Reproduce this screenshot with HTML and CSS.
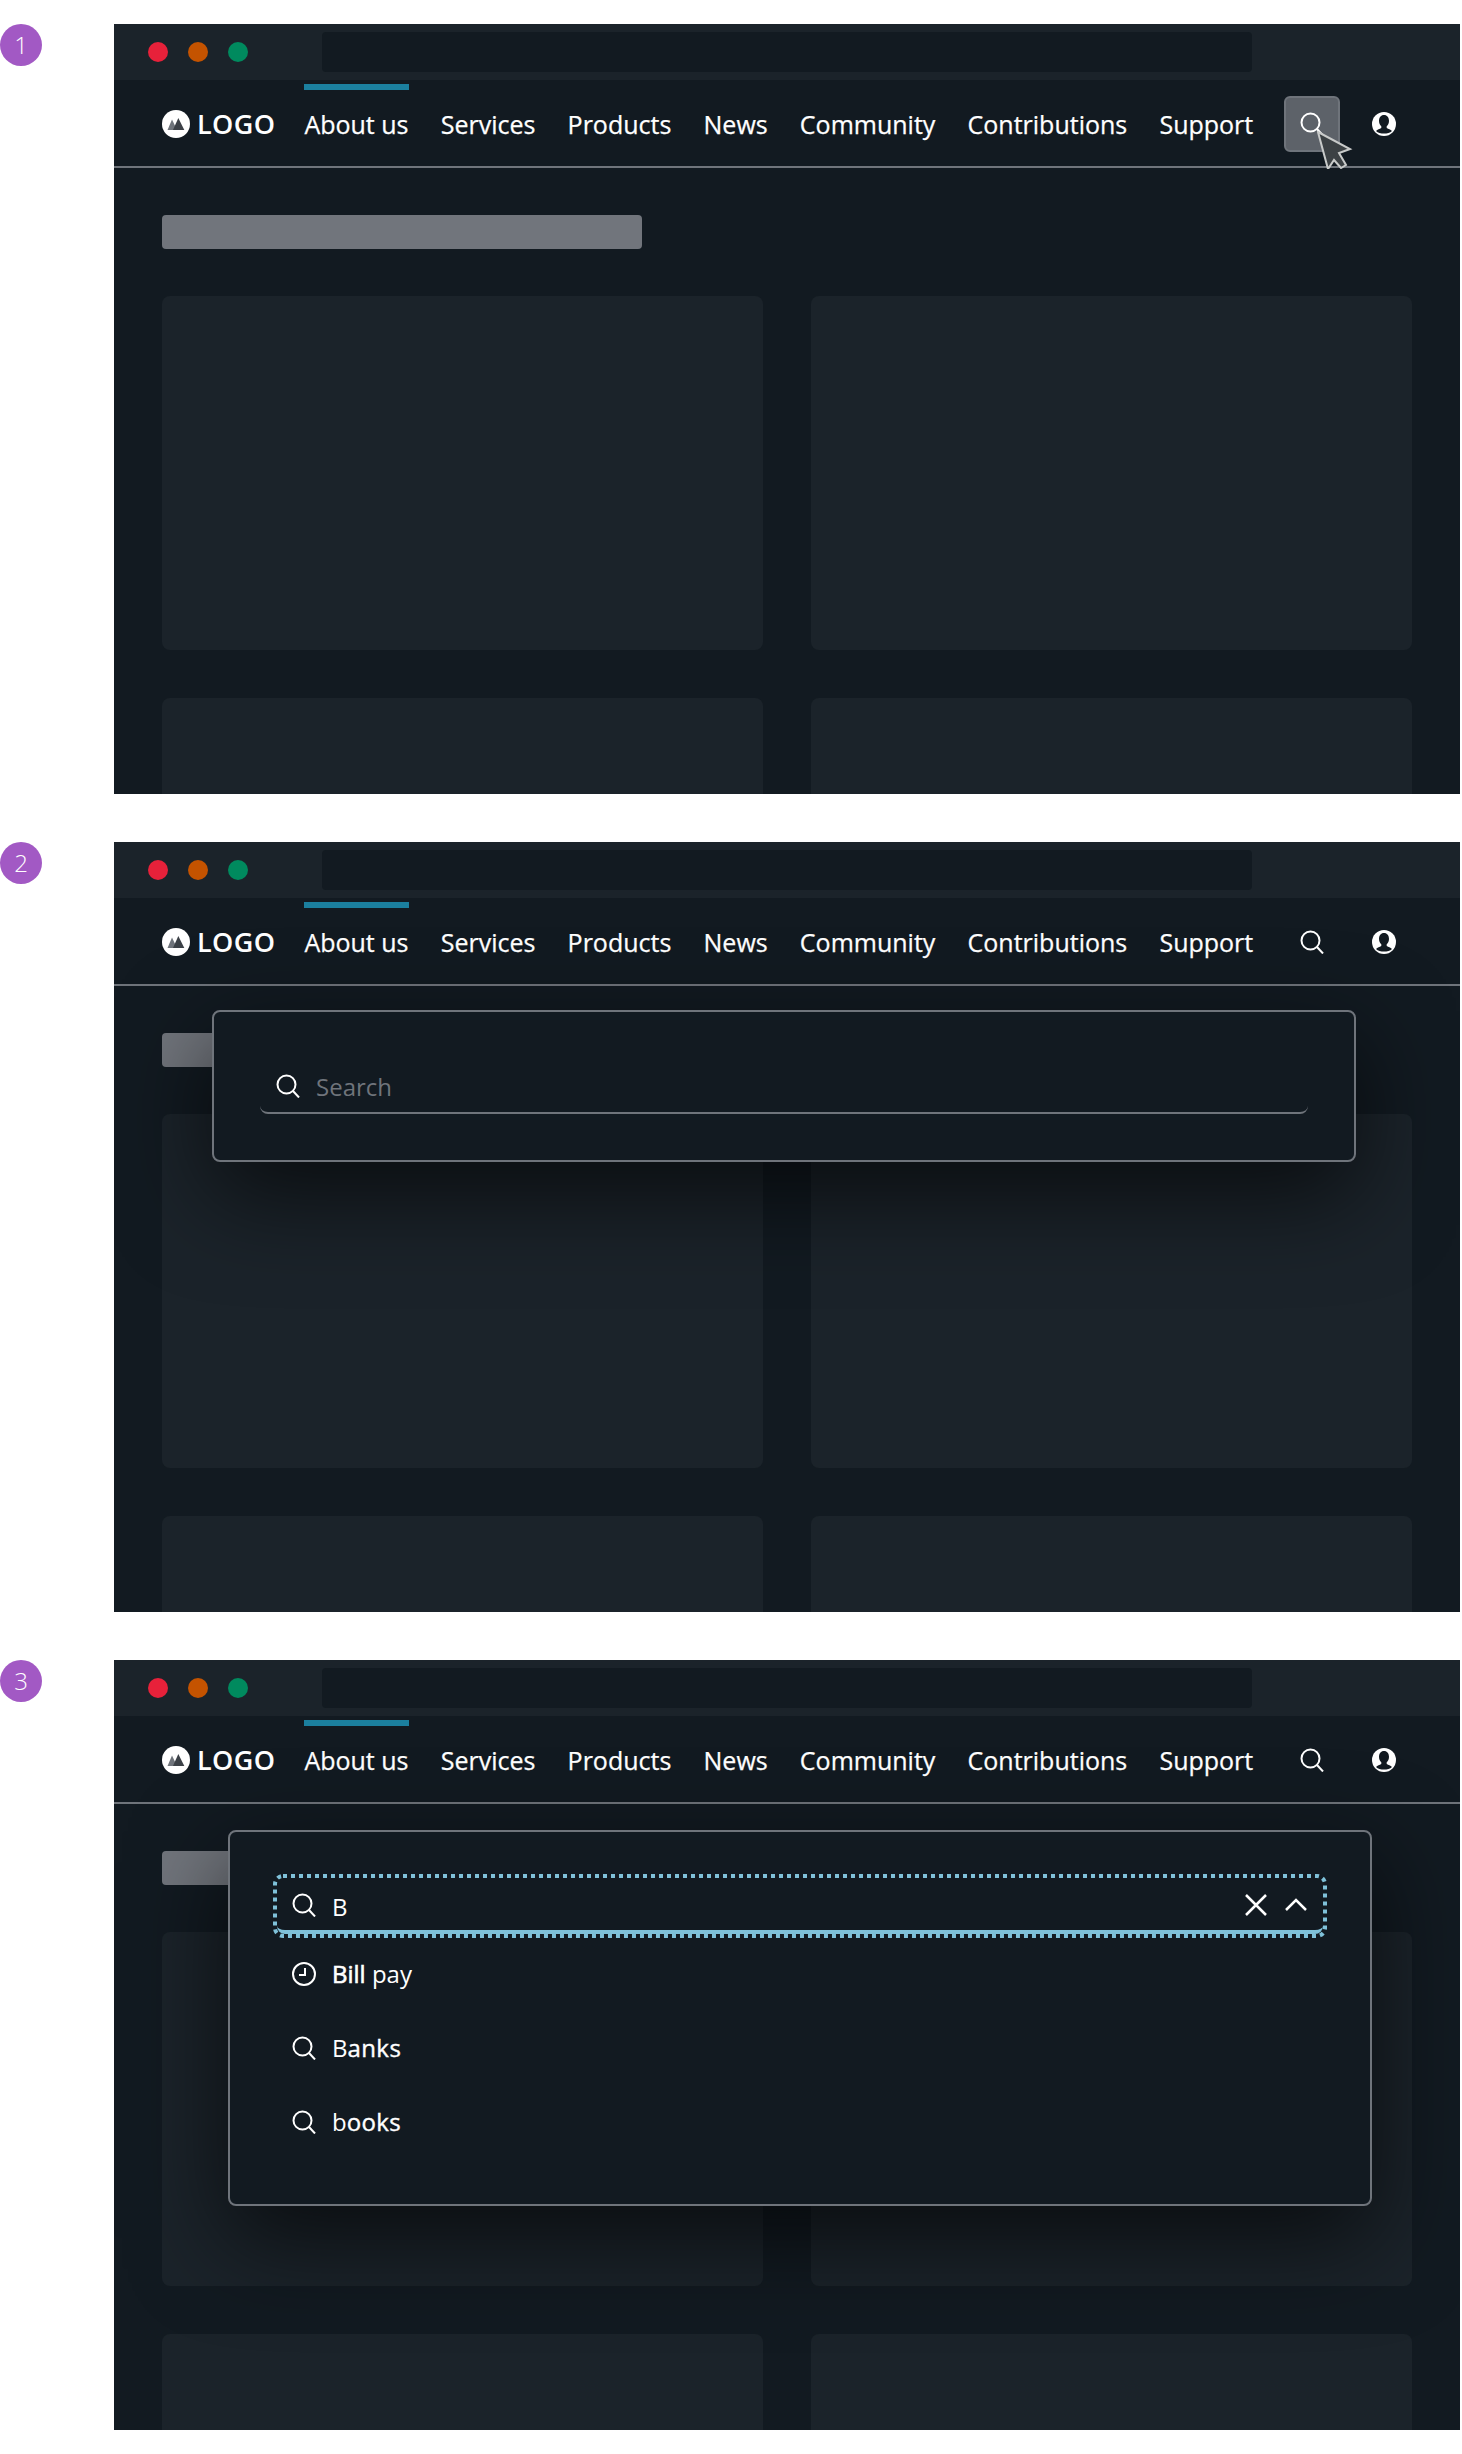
FILE: index.html
```html
<!DOCTYPE html>
<html lang="en">
<head>
    <meta charset="UTF-8">
    <meta name="viewport" content="width=device-width, initial-scale=1.0">
    <title>Search steps</title>
    <link rel="stylesheet" href="styles.css">
</head>
<body>
    <svg class="sprite" aria-hidden="true">
        <symbol id="i-search" viewBox="0 0 24 24">
            <circle cx="10.5" cy="10.5" r="9" fill="none" stroke="#fff" stroke-width="2"/>
            <path d="M17 17l6 6.5" fill="none" stroke="#fff" stroke-width="2"/>
        </symbol>
        <symbol id="i-clock" viewBox="0 0 24 24">
            <circle cx="12" cy="12" r="11" fill="none" stroke="#fff" stroke-width="2"/>
            <path d="M13 6v7H7" fill="none" stroke="#fff" stroke-width="2"/>
        </symbol>
        <symbol id="i-user" viewBox="0 0 24 24">
            <circle cx="12" cy="12" r="12" fill="#fff"/>
            <path d="M12 3c-3.200 0-5 2.600-5 5.800 0 2.400.9 4.200 2.300 5.400v1.800c-1.800.9-3.800 1.500-5.300 3 1.900 1.900 4.800 2.500 8 2.500s6.100-.6 8-2.500c-1.500-1.500-3.500-2.100-5.300-3v-1.800c1.400-1.200 2.300-3 2.300-5.400 0-3.200-1.800-5.800-5-5.800z" fill="#121a21"/>
        </symbol>
        <symbol id="i-logo" viewBox="0 0 28 28">
            <circle cx="14" cy="14" r="14" fill="#fff"/>
            <path d="M5.500 20L10 9.500 15 20z" fill="#6f747b"/>
            <path d="M11 20L16.300 8l6 12z" fill="#3c4147"/>
        </symbol>
    </svg>

    <!-- 1: closed, search button hovered -->
    <section class="step">
        <div class="badge">1</div>
        <div class="frame">
            <div class="browser-bar">
                <span class="dot dot-red"></span>
                <span class="dot dot-orange"></span>
                <span class="dot dot-green"></span>
                <div class="url-bar"></div>
            </div>
            <nav class="nav">
                <a class="logo"><svg class="logo-icon"><use href="#i-logo"/></svg>LOGO</a>
                <a class="nav-link active">About us</a>
                <a class="nav-link">Services</a>
                <a class="nav-link">Products</a>
                <a class="nav-link">News</a>
                <a class="nav-link">Community</a>
                <a class="nav-link">Contributions</a>
                <a class="nav-link">Support</a>
                <div class="nav-icons">
                    <span class="icon-btn hover"><svg class="icon"><use href="#i-search"/></svg></span>
                    <span class="icon-btn"><svg class="icon"><use href="#i-user"/></svg></span>
                </div>
            </nav>
            <main class="content">
                <div class="title-bar"></div>
                <div class="cards">
                    <div class="card"></div>
                    <div class="card"></div>
                    <div class="card"></div>
                    <div class="card"></div>
                </div>
            </main>
            <svg class="cursor" viewBox="0 0 36 38">
                <path d="M1 1l32 17-11 4 7 12-5 3-7-8-6 9z" fill="#3c4144" stroke="#c8cac9" stroke-width="2"/>
            </svg>
        </div>
    </section>

    <!-- 2: search open, empty -->
    <section class="step">
        <div class="badge">2</div>
        <div class="frame">
            <div class="browser-bar">
                <span class="dot dot-red"></span>
                <span class="dot dot-orange"></span>
                <span class="dot dot-green"></span>
                <div class="url-bar"></div>
            </div>
            <nav class="nav">
                <a class="logo"><svg class="logo-icon"><use href="#i-logo"/></svg>LOGO</a>
                <a class="nav-link active">About us</a>
                <a class="nav-link">Services</a>
                <a class="nav-link">Products</a>
                <a class="nav-link">News</a>
                <a class="nav-link">Community</a>
                <a class="nav-link">Contributions</a>
                <a class="nav-link">Support</a>
                <div class="nav-icons">
                    <span class="icon-btn"><svg class="icon"><use href="#i-search"/></svg></span>
                    <span class="icon-btn"><svg class="icon"><use href="#i-user"/></svg></span>
                </div>
            </nav>
            <main class="content">
                <div class="title-bar"></div>
                <div class="cards">
                    <div class="card"></div>
                    <div class="card"></div>
                    <div class="card"></div>
                    <div class="card"></div>
                </div>
            </main>
            <div class="modal modal-empty">
                <div class="search-field">
                    <svg class="icon"><use href="#i-search"/></svg>
                    <span class="placeholder">Search</span>
                </div>
            </div>
        </div>
    </section>

    <!-- 3: typing, with suggestions -->
    <section class="step">
        <div class="badge">3</div>
        <div class="frame">
            <div class="browser-bar">
                <span class="dot dot-red"></span>
                <span class="dot dot-orange"></span>
                <span class="dot dot-green"></span>
                <div class="url-bar"></div>
            </div>
            <nav class="nav">
                <a class="logo"><svg class="logo-icon"><use href="#i-logo"/></svg>LOGO</a>
                <a class="nav-link active">About us</a>
                <a class="nav-link">Services</a>
                <a class="nav-link">Products</a>
                <a class="nav-link">News</a>
                <a class="nav-link">Community</a>
                <a class="nav-link">Contributions</a>
                <a class="nav-link">Support</a>
                <div class="nav-icons">
                    <span class="icon-btn"><svg class="icon"><use href="#i-search"/></svg></span>
                    <span class="icon-btn"><svg class="icon"><use href="#i-user"/></svg></span>
                </div>
            </nav>
            <main class="content">
                <div class="title-bar"></div>
                <div class="cards">
                    <div class="card"></div>
                    <div class="card"></div>
                    <div class="card"></div>
                    <div class="card"></div>
                </div>
            </main>
            <div class="modal modal-results">
                <div class="search-field focused">
                    <svg class="focus-ring"><rect class="focus-rect" rx="8"/></svg>
                    <svg class="icon"><use href="#i-search"/></svg>
                    <span class="typed">B</span>
                    <svg class="clear-icon" viewBox="0 0 22 22"><path d="M1 1l20 20M21 1L1 21" fill="none" stroke="#fff" stroke-width="2.500"/></svg>
                    <svg class="chevron-icon" viewBox="0 0 22 13"><path d="M1 12L11 2l10 10" fill="none" stroke="#fff" stroke-width="2.500"/></svg>
                </div>
                <ul class="options">
                    <li class="option"><svg class="icon"><use href="#i-clock"/></svg><span><b class="strong">Bill</b> pay</span></li>
                    <li class="option"><svg class="icon"><use href="#i-search"/></svg><span>B<b class="medium">anks</b></span></li>
                    <li class="option"><svg class="icon"><use href="#i-search"/></svg><span>b<b class="medium">ooks</b></span></li>
                </ul>
            </div>
        </div>
    </section>
</body>
</html>
```

FILE: styles.css
```css
body {
    margin: 0;
    background-color: #fff;
    font-family: "Open Sans", "Noto Sans", sans-serif;
    color: #fff;
}

.sprite {
    display: none;
}

.step {
    display: flex;
    align-items: flex-start;
    padding-top: 24px;
    margin-bottom: 24px;
}

.badge {
    width: 42px;
    height: 42px;
    flex: none;
    border-radius: 50%;
    background-color: #a259c4;
    font-size: 24px;
    font-weight: 300;
    line-height: 42px;
    text-align: center;
}

.frame {
    position: relative;
    width: 1346px;
    height: 770px;
    margin-left: 72px;
    overflow: hidden;
    background-color: #121a21;
}

/* browser chrome */
.browser-bar {
    display: flex;
    align-items: center;
    height: 56px;
    padding-left: 34px;
    box-sizing: border-box;
    background-color: #1b232a;
}

.dot {
    width: 20px;
    height: 20px;
    margin-right: 20px;
    border-radius: 50%;
}

.dot-red { background-color: #e7213a; }
.dot-orange { background-color: #c45300; }
.dot-green { background-color: #008a5e; }

.url-bar {
    width: 930px;
    height: 40px;
    margin-left: 54px;
    border-radius: 4px;
    background-color: #121a21;
}

/* nav */
.nav {
    display: flex;
    align-items: center;
    gap: 32.2px;
    height: 88px;
    padding: 2px 48px 0;
    box-sizing: border-box;
    border-bottom: 2px solid #6f747b;
}

.logo {
    display: flex;
    align-items: center;
    gap: 7px;
    margin-right: -3.2px;
    font-size: 27px;
    font-weight: 600;
    letter-spacing: 0.4px;
    line-height: 30px;
}

.logo-icon {
    width: 28px;
    height: 28px;
}

.nav-link {
    position: relative;
    align-self: stretch;
    display: flex;
    align-items: center;
    font-size: 25px;
    -webkit-text-stroke: 0.25px #fff;
    white-space: nowrap;
}

.nav-link.active::before {
    content: "";
    position: absolute;
    top: 2px;
    left: 0;
    right: 0;
    height: 6px;
    background-color: #1b7f9e;
}

.nav-icons {
    display: flex;
    flex: 1;
    justify-content: flex-end;
    gap: 16px;
    margin-left: -32px;
}

.icon-btn {
    display: flex;
    align-items: center;
    justify-content: center;
    width: 56px;
    height: 56px;
    box-sizing: border-box;
    border-radius: 6px;
}

.icon-btn.hover {
    border: 2px solid #6f747b;
    background-color: #5d6269;
}

.icon {
    width: 24px;
    height: 24px;
    flex: none;
}

.cursor {
    position: absolute;
    top: 107px;
    left: 1203px;
    width: 36px;
    height: 38px;
}

/* page placeholders */
.content {
    padding: 47px 48px 0;
}

.title-bar {
    width: 480px;
    height: 34px;
    border-radius: 4px;
    background-color: #71757c;
}

.cards {
    display: grid;
    grid-template-columns: 601px 601px;
    grid-auto-rows: 354px;
    gap: 48px;
    margin-top: 47px;
}

.card {
    border-radius: 8px;
    background-color: #1b232a;
}

/* search dialog */
.modal {
    position: absolute;
    width: 1144px;
    box-sizing: border-box;
    border: 2px solid #6f747b;
    border-radius: 8px;
    background-color: #121a21;
    box-shadow: 0 32px 96px rgba(0, 0, 0, 0.65);
}

.modal-empty {
    top: 168px;
    left: 98px;
    padding: 46px;
}

.modal-results {
    top: 170px;
    left: 114px;
    padding: 46px 47px;
}

.search-field {
    position: relative;
    display: flex;
    align-items: center;
    gap: 16px;
    height: 56px;
    padding: 2px 16px 0;
    box-sizing: border-box;
    border-bottom: 2px solid #6f747b;
    border-radius: 0 0 8px 8px;
    font-size: 24px;
}

.placeholder {
    color: #6f747b;
}

.search-field.focused {
    padding-left: 15px;
    padding-right: 16px;
    padding-top: 4px;
    border-bottom: 4px solid #7fc1d9;
}

.focus-ring {
    position: absolute;
    top: -4px;
    left: -4px;
    width: calc(100% + 8px);
    height: calc(100% + 12px);
    overflow: visible;
}

.focus-rect {
    x: 2px;
    y: 2px;
    width: calc(100% - 4px);
    height: calc(100% - 4px);
    fill: none;
    stroke: #7fc1d9;
    stroke-width: 4px;
    stroke-dasharray: 4 4;
}

.search-field.focused .icon,
.clear-icon,
.chevron-icon {
    margin-top: -3px;
}

.typed {
    flex: 1;
}

.clear-icon {
    width: 22px;
    height: 22px;
}

.chevron-icon {
    width: 22px;
    height: 13px;
    margin-left: 2px;
}

.options {
    margin: 2px 0 0;
    padding: 0;
    list-style: none;
}

.option {
    display: flex;
    align-items: center;
    gap: 16px;
    height: 74px;
    padding-left: 15px;
    font-size: 24px;
}

.option span {
    padding-top: 1px;
}

.option .icon {
    margin-top: 2px;
}

/* only regular and semibold cuts are installed, so the match weight is drawn with a stroke */
.strong {
    font-weight: 400;
    -webkit-text-stroke: 0.6px #fff;
}

.medium {
    font-weight: 400;
    letter-spacing: 0.4px;
    -webkit-text-stroke: 0.4px #fff;
}
```
